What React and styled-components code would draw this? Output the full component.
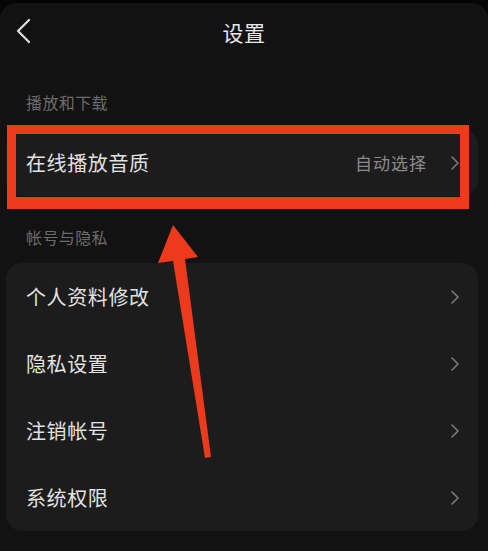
import React from 'react'
import styled, { createGlobalStyle } from 'styled-components'

const Global = createGlobalStyle`
body{
margin:0;
background:#050505;
font-family:"Noto Sans CJK SC","Noto Sans",sans-serif;
}
`

const Frame = styled.div`
width:488px;
height:551px;
background:#050505;
padding-top:3px;
box-sizing:border-box;
overflow:hidden;
`
const Screen = styled.div`
position:relative;
height:100%;
background:#121212;
border-radius:16px 16px 0 0;
`
const Header = styled.div`
position:relative;
height:58px;
display:flex;
align-items:center;
justify-content:center;
`
const Title = styled.div`
color:#e8e8e8;
font-size:21px;
letter-spacing:0.5px;
`
const Back = styled.svg`
position:absolute;
left:15px;
top:15px;
`
const SectionLabel = styled.div`
margin:${p => p.$top}px 0 ${p => p.$bottom}px 26px;
height:22px;
line-height:22px;
font-size:16px;
letter-spacing:0.4px;
color:#6b6b6b;
`
const CardWrap = styled.div`
position:relative;
margin:0 10px 0 6px;
`
const Card = styled.div`
background:#1c1c1c;
border-radius:16px;
overflow:hidden;
`
const Row = styled.div`
height:67px;
display:flex;
align-items:center;
padding:0 19px 0 20px;
`
const RowText = styled.div`
flex:1;
color:#e2e2e2;
font-size:20px;
letter-spacing:0.6px;
`
const RowValue = styled.div`
color:#8a8a8a;
font-size:17px;
letter-spacing:1px;
margin-right:24px;
`
const Highlight = styled.div`
position:absolute;
left:1px;
top:-4px;
width:462px;
height:84px;
box-sizing:border-box;
border:9px solid #ee3a1c;
border-bottom-width:12px;
`
const Arrow = styled.svg`
position:absolute;
left:0;
top:-3px;
pointer-events:none;
`

const Chevron = () => (
  <svg width="8" height="14" viewBox="0 0 8 14">
    <path d="M1 1 L7 7 L1 13" fill="none" stroke="#7a7a7a" strokeWidth="1.6" strokeLinecap="round" strokeLinejoin="round" />
  </svg>
)

const Item = ({ label, value }) => (
  <Row>
    <RowText>{label}</RowText>
    {value && <RowValue>{value}</RowValue>}
    <Chevron />
  </Row>
)

const App = () => {
  return (
    <Frame>
      <Global />
      <Screen>
        <Header>
          <Back width="18" height="26" viewBox="0 0 18 26">
            <path d="M14 2 L3 13 L14 24" fill="none" stroke="#e0e0e0" strokeWidth="2.2" strokeLinecap="round" strokeLinejoin="round" />
          </Back>
          <Title>设置</Title>
        </Header>

        <SectionLabel $top={30} $bottom={16}>播放和下载</SectionLabel>
        <CardWrap>
          <Card>
            <Item label="在线播放音质" value="自动选择" />
          </Card>
          <Highlight />
        </CardWrap>

        <SectionLabel $top={30} $bottom={15}>帐号与隐私</SectionLabel>
        <CardWrap>
          <Card>
            <Item label="个人资料修改" />
            <Item label="隐私设置" />
            <Item label="注销帐号" />
            <Item label="系统权限" />
          </Card>
        </CardWrap>

        <Arrow width="488" height="551" viewBox="0 0 488 551">
          <polygon points="173,225 198,257 185,259 211,457 205,458 173,261 158,263" fill="#ee3a1c" />
        </Arrow>
      </Screen>
    </Frame>
  )
}

export default App
